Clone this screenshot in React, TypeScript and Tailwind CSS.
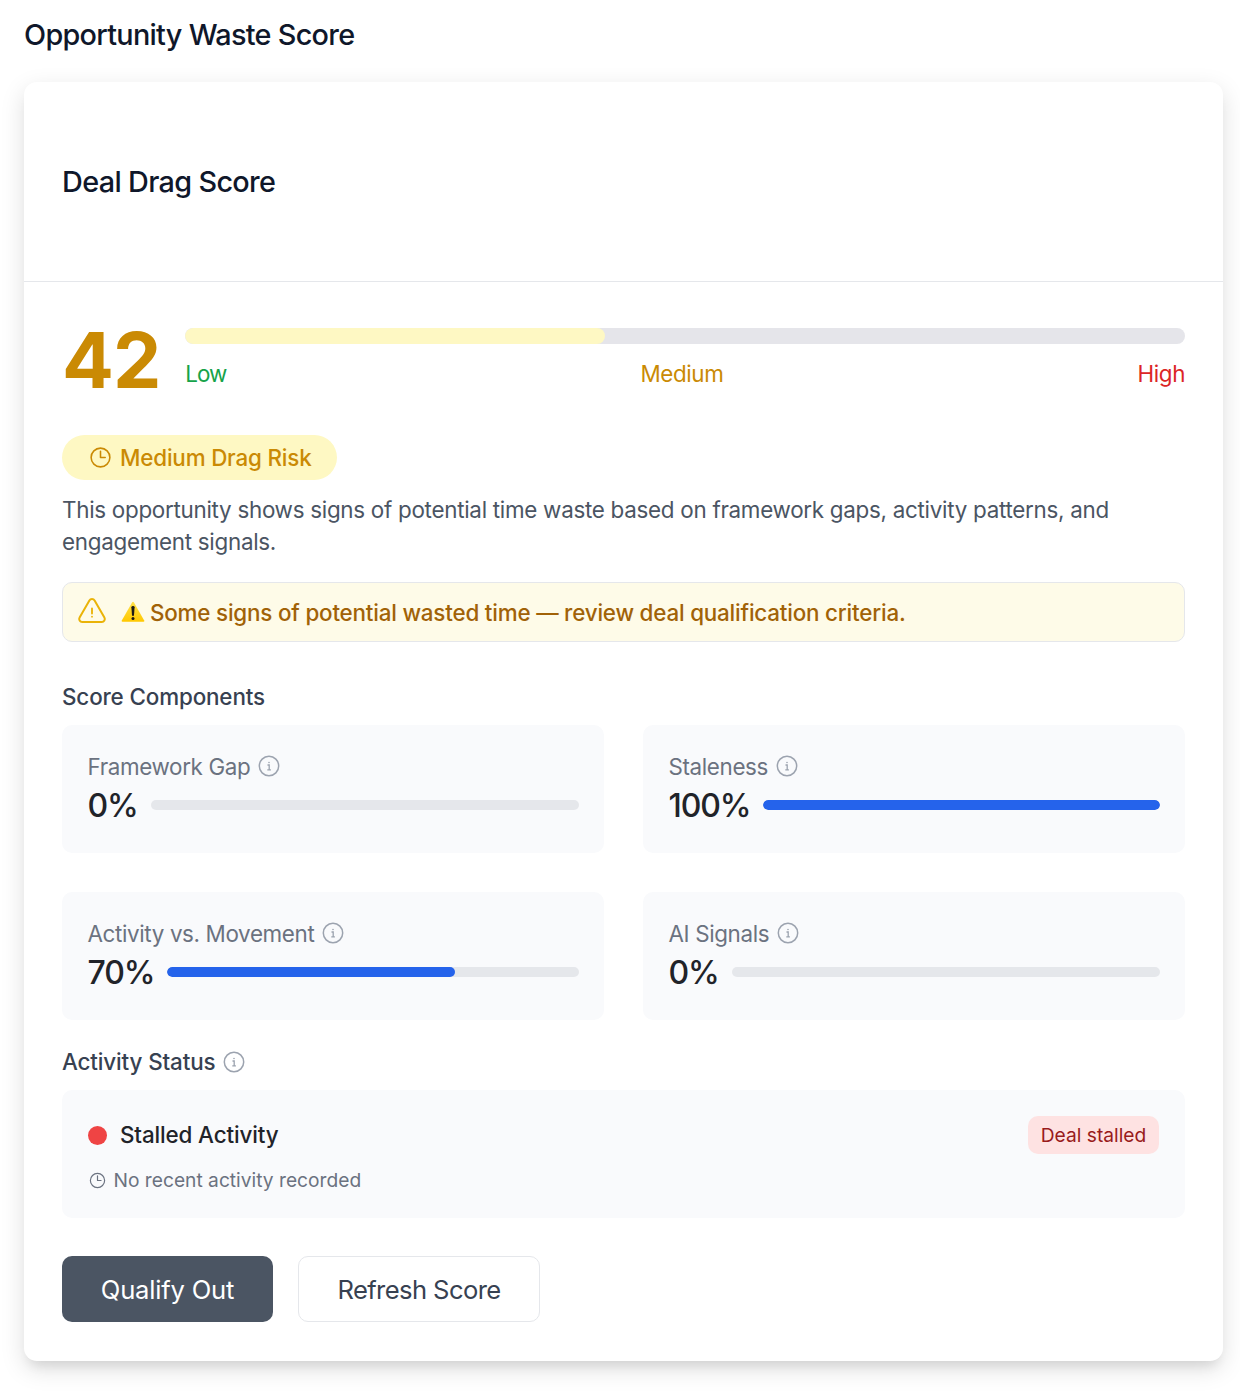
import type { ReactNode } from "react";

function ClockIcon({ className }: { className: string }) {
  return (
    <svg viewBox="0 0 24 24" fill="none" stroke="currentColor" strokeWidth="1.5" strokeLinecap="round" strokeLinejoin="round" className={className} aria-hidden="true">
      <path d="M12 6v6h4.5m4.5 0a9 9 0 1 1-18 0 9 9 0 0 1 18 0Z" />
    </svg>
  );
}

function WarningIcon({ className }: { className: string }) {
  return (
    <svg viewBox="0 0 24 24" fill="none" stroke="currentColor" strokeWidth="1.5" strokeLinecap="round" strokeLinejoin="round" className={className} aria-hidden="true">
      <path d="M2.697 16.126c-.866 1.5.217 3.374 1.948 3.374h14.71c1.73 0 2.813-1.874 1.948-3.374L13.949 3.378c-.866-1.5-3.032-1.5-3.898 0L2.697 16.126Z" />
      <path d="M12 9.3v3.9M12 15.500h.007v.008H12v-.008Z" strokeWidth="1.4" />
    </svg>
  );
}

function WarningSign() {
  return (
    <svg viewBox="0 0 24 22" className="h-[22px] w-6 shrink-0" aria-hidden="true">
      <defs>
        <linearGradient id="sign" x1="0" y1="0" x2="0" y2="1">
          <stop offset="0" stopColor="#ffe14a" />
          <stop offset="1" stopColor="#ffc800" />
        </linearGradient>
      </defs>
      <path d="M11.2 1.3q.8-1.2 1.6 0L23.2 19.6q.5 1.2-.8 1.2H1.6q-1.3 0-.8-1.2Z" fill="url(#sign)" />
      <path d="M10.4 6.2q0-1.2 1.6-1.2t1.6 1.2l-.6 8q-.1.8-1 .8t-1-.8Z" fill="#1c1917" />
      <circle cx="12" cy="17.6" r="1.5" fill="#1c1917" />
    </svg>
  );
}

function InfoIcon() {
  return (
    <svg viewBox="0 0 22 22" fill="none" stroke="currentColor" strokeWidth="1.5" className="h-[22px] w-[22px] text-[#9ca3af]" aria-hidden="true">
      <circle cx="11" cy="11" r="9.7" />
      <path d="M9.5 10h1.7v4.7M9.3 14.900h3.600" strokeWidth="1.3" />
      <circle cx="11" cy="7.5" r=".8" fill="currentColor" stroke="none" />
    </svg>
  );
}

type ComponentScore = {
  label: string;
  value: number;
};

const components: ComponentScore[] = [
  { label: "Framework Gap", value: 0 },
  { label: "Staleness", value: 100 },
  { label: "Activity vs. Movement", value: 70 },
  { label: "AI Signals", value: 0 },
];

function ScoreCard({ label, value }: ComponentScore) {
  return (
    <div className="h-32 rounded-[10px] bg-[#f9fafc] px-[25.5px] pt-[25px]">
      <div className="flex h-8 items-center gap-2 text-[22.4px] tracking-[-0.36px] text-[#6b7280]">
        <span className="pt-px">{label}</span>
        <InfoIcon />
      </div>
      <div className="flex h-[45px] items-center">
        <span className="mr-[13px] pt-[3px] text-[32px] font-medium tracking-[-1.100px] text-[#212329]">{value}%</span>
        <div className="h-[10px] flex-1 overflow-hidden rounded-full bg-gray-200">
          <div className="h-full rounded-full bg-[#2563eb]" style={{ width: `${value}%` }} />
        </div>
      </div>
    </div>
  );
}

function SectionTitle({ children }: { children: ReactNode }) {
  return (
    <h3 className="flex h-8 items-center gap-2 pt-px text-[22.4px] font-medium tracking-[-0.13px] text-[#374151]">
      {children}
    </h3>
  );
}

export default function App() {
  return (
    <main className="h-[1394px] overflow-hidden bg-white px-6 pt-[15px] pr-[17px] font-['Inter',sans-serif]">
      <h1 className="h-10 text-[28.8px] leading-10 font-medium tracking-[-0.7px] text-[#0f172a]">
        Opportunity Waste Score
      </h1>

      <section className="mt-[27px] h-[1279px] rounded-[13px] bg-white shadow-[0_8px_24px_rgb(0_0_0/0.13),0_10px_12px_-6px_rgb(0_0_0/0.09)]">
        <header className="flex h-[200px] items-center border-b border-gray-200 px-[38px]">
          <h2 className="text-[28.8px] font-medium tracking-[-0.65px] text-[#0f172a]">Deal Drag Score</h2>
        </header>

        <div className="px-[38px] pt-[38px]">
          <div className="flex h-[77px] items-center">
            <span className="mr-[25px] pt-[5px] text-[76.8px] leading-none font-bold tracking-[-1px] text-[#ca8a04]">
              42
            </span>
            <div className="flex-1">
              <div className="h-4 overflow-hidden rounded-full bg-[#e5e5ea]">
                <div className="h-full w-[42%] rounded-full bg-[#fef8c3]" />
              </div>
              <div className="mt-[13px] flex h-8 items-center justify-between pt-px text-[22.4px] tracking-[-0.4px]">
                <span className="tracking-[-1px] text-[#16a34a]">Low</span>
                <span className="text-[#ca8a04]">Medium</span>
                <span className="text-[#dc2626]">High</span>
              </div>
            </div>
          </div>

          <div className="mt-[38px] flex h-[45px] w-[275px] items-center gap-[7px] rounded-full bg-[#fef8c3] pl-[26px] text-[22.4px] font-medium tracking-[-0.18px] text-[#ca8a04]">
            <ClockIcon className="h-[25px] w-[25px]" />
            <span>Medium Drag Risk</span>
          </div>
          <p className="mt-[14px] text-[22.4px] leading-8 tracking-[-0.28px] text-[#4b5563]">
            This opportunity shows signs of potential time waste based on framework gaps, activity patterns, and
            engagement signals.
          </p>

          <div className="mt-6 flex h-[60px] items-center rounded-[10px] border border-gray-200 bg-[#fefbe8] px-[13px] text-[22.4px] font-medium tracking-[-0.19px] text-[#a16207]">
            <WarningIcon className="mr-[13px] h-8 w-8 text-[#eab308]" />
            <WarningSign />
            <span className="ml-[5px] pt-px">
              Some signs of potential wasted time — review deal qualification criteria.
            </span>
          </div>

          <div className="mt-[38px]">
            <SectionTitle>Score Components</SectionTitle>
            <div className="mt-[13px] grid grid-cols-2 gap-[39px]">
              {components.map((c) => (
                <ScoreCard key={c.label} {...c} />
              ))}
            </div>
          </div>

          <div className="mt-[25px]">
            <SectionTitle>
              <span>Activity Status</span>
              <InfoIcon />
            </SectionTitle>
            <div className="mt-[13px] h-32 rounded-[10px] bg-[#f9fafc] px-[26px] pt-[26px]">
              <div className="flex h-[38px] items-center">
                <span className="mr-[13px] h-[19px] w-[19px] rounded-full bg-[#ef4444]" />
                <span className="text-[22.4px] font-medium tracking-[-0.13px] text-[#212329]">Stalled Activity</span>
                <span className="ml-auto flex h-[38px] w-[131px] items-center justify-center rounded-[10px] bg-[#fee2e2] text-[19.2px] text-[#991b1b]">
                  Deal stalled
                </span>
              </div>
              <div className="mt-[13px] flex h-[26px] items-center gap-[6.5px] text-[19.2px] text-[#6b7280]">
                <ClockIcon className="h-[19px] w-[19px]" />
                <span>No recent activity recorded</span>
              </div>
            </div>
          </div>

          <div className="mt-[38px] flex gap-[25px]">
            <button type="button" className="h-[66px] w-[211px] rounded-[10px] bg-[#4b5563] pt-[2px] text-[25.6px] tracking-[-0.2px] text-white">
              Qualify Out
            </button>
            <button type="button" className="h-[66px] w-[242px] rounded-[10px] border border-gray-200 bg-white pt-[2px] text-[25.6px] tracking-[-0.6px] text-[#374151]">
              Refresh Score
            </button>
          </div>
        </div>
      </section>
    </main>
  );
}
